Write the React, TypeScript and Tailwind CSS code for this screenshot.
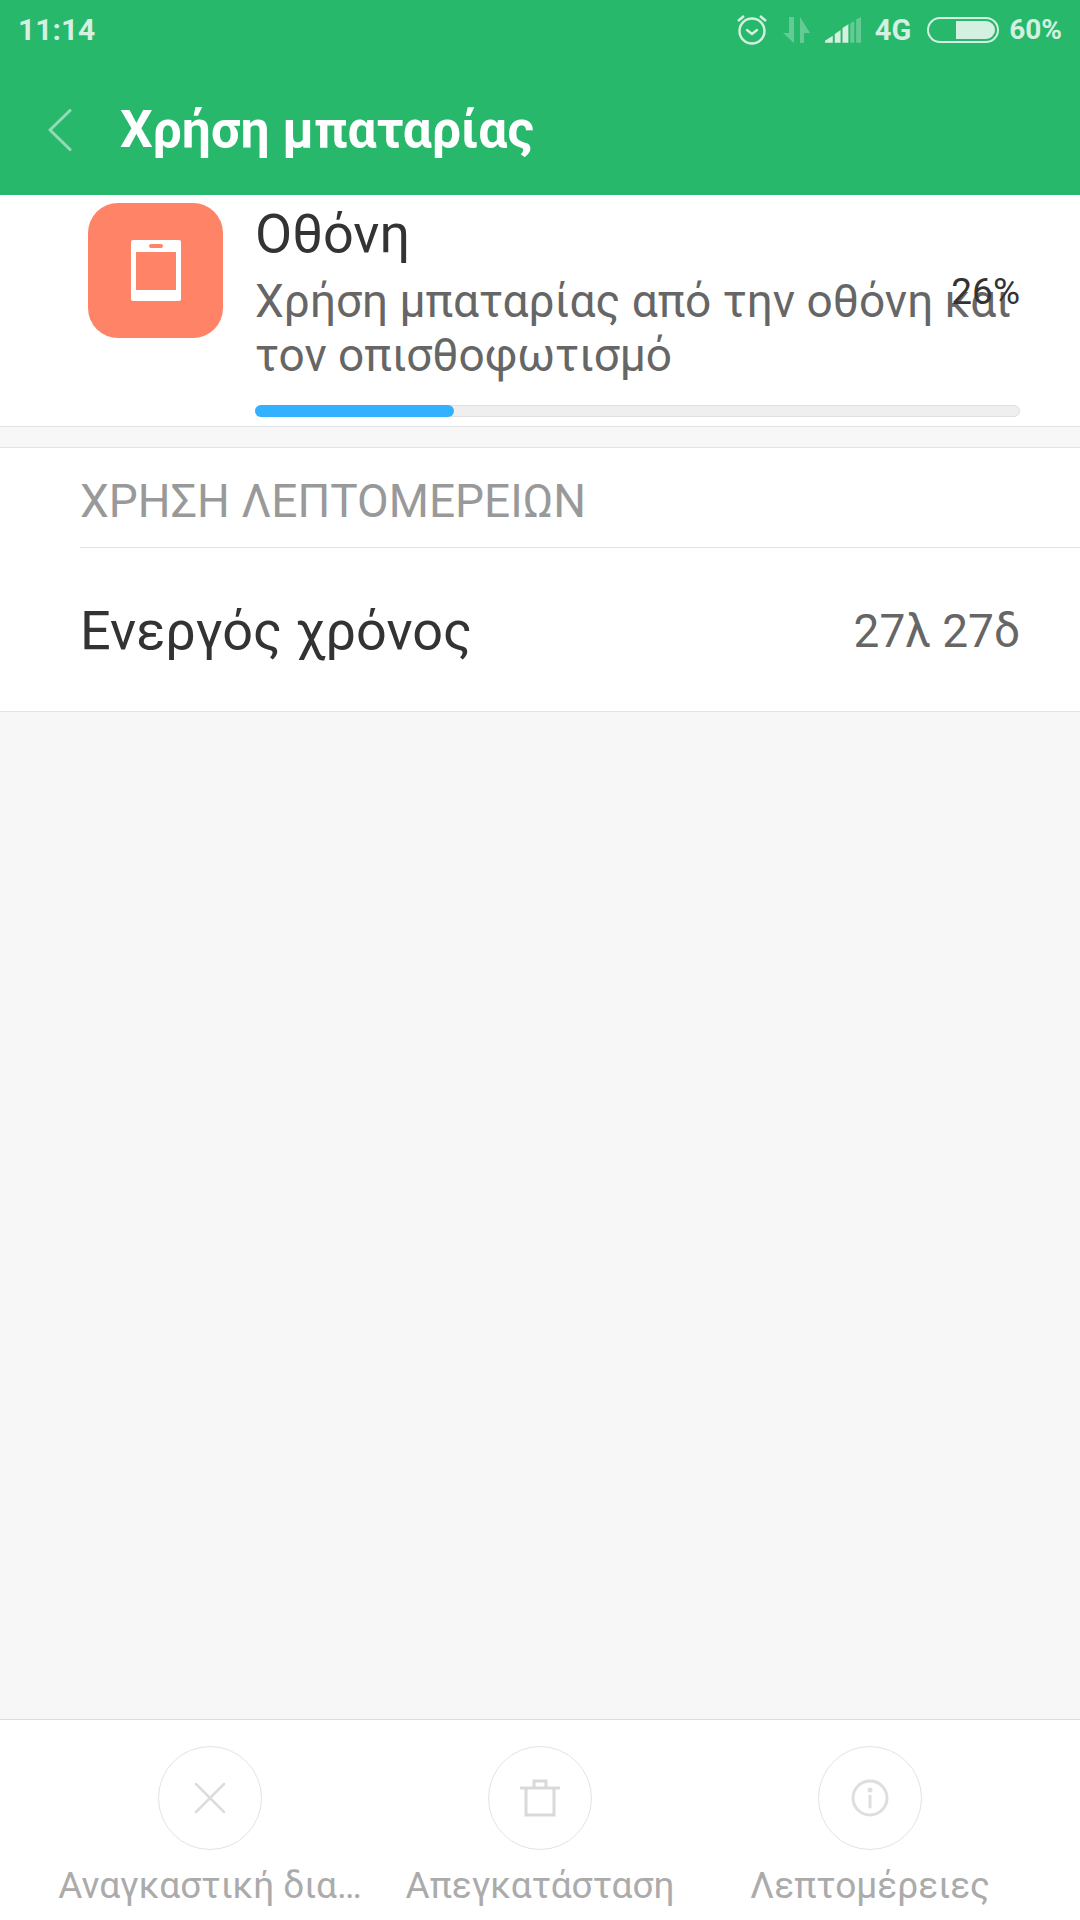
import React from "react";

const font = { fontFamily: "Roboto, sans-serif" };

function StatusIcons() {
  return (
    <div className="flex items-center text-[#d4f0e0] font-bold text-[29px] leading-none">
      <svg width="32" height="32" viewBox="0 0 32 32" fill="none" stroke="#d4f0e0" strokeWidth="2.4" className="mr-[15px] -mt-[2px]">
        <circle cx="16" cy="18" r="12.5" />
        <path d="M11 17l5 4 5-4" strokeLinecap="round" strokeLinejoin="round" />
        <path d="M2 8l6-5M30 8l-6-5" strokeWidth="2.4" />
      </svg>
      <svg width="27" height="26" viewBox="0 0 27 26" fill="#d4f0e0" opacity="0.35" className="mr-[15px]">
        <path d="M11 0v26L0 16h6V0zM17 0L27 16h-6v10h-4z" />
      </svg>
      <svg width="37" height="26" viewBox="0 0 38 26" className="mr-[13px]">
        <path d="M0 26v-2l8-5v7zM10 26V17l6-4v13zM18 26V11l6-4v19z" fill="#d4f0e0" />
        <path d="M26 26V6l4-2v22zM32 26V2l5-2v26z" fill="#d4f0e0" opacity="0.35" />
      </svg>
      <span className="mr-[16px]">4G</span>
      <div className="w-[72px] h-[26px] rounded-full border-2 border-[#d4f0e0] mr-[10px] p-[2px] flex justify-end">
        <div className="w-[39px] h-full bg-[#d4f0e0] rounded-r-full" />
      </div>
      <span className="text-[28px]">60%</span>
    </div>
  );
}

function Action({ label, children }: { label: string; children: React.ReactNode }) {
  return (
    <div className="w-[330px] flex flex-col items-center min-w-0">
      <div className="w-[104px] h-[104px] rounded-full border border-[#e3e3e3] flex items-center justify-center">
        {children}
      </div>
      <span className="text-[37px] leading-[40px] mt-[16px] text-[#ababab] whitespace-nowrap">{label}</span>
    </div>
  );
}

export default function App() {
  return (
    <div className="w-[1080px] h-[1920px] flex flex-col bg-[#f7f7f7] overflow-hidden" style={font}>
      <header className="h-[195px] bg-[#28b86b] shrink-0">
        <div className="h-[60px] flex items-center justify-between pl-[18px] pr-[18px]">
          <span className="text-[30px] font-bold text-[#d4f0e0] leading-none">11:14</span>
          <StatusIcons />
        </div>
        <div className="h-[100px] mt-[20px] flex items-center pl-[48px]">
          <svg width="24" height="42" viewBox="0 0 24 42" fill="none" stroke="#93dbb5" strokeWidth="3" strokeLinecap="round" strokeLinejoin="round">
            <path d="M22 1.5L2 21l20 19.5" />
          </svg>
          <h1 className="ml-[48px] text-[51.6px] font-bold text-white leading-none">Χρήση μπαταρίας</h1>
        </div>
      </header>

      <section className="relative h-[232px] bg-white border-b border-[#e3e3e3] shrink-0 flex pl-[88px] pr-[60px] pt-[8px]">
        <div className="w-[135px] h-[135px] rounded-[30px] bg-[#ff8467] flex items-center justify-center shrink-0">
          <svg width="50" height="61" viewBox="0 0 50 61" className="ml-[1px]">
            <path fillRule="evenodd" fill="#fff" d="M2 0h46a2 2 0 012 2v57a2 2 0 01-2 2H2a2 2 0 01-2-2V2a2 2 0 012-2zM5 12v38h40V12zM20 4a2 2 0 000 4h10a2 2 0 000-4z" />
          </svg>
        </div>
        <div className="ml-[33px] flex-1 min-w-0 flex flex-col">
          <div className="text-[54px] leading-[62px] text-[#333] -ml-[1px]">Οθόνη</div>
          <div className="text-[46px] leading-[54px] text-[#666] mt-[9px] -ml-[1px] whitespace-nowrap">
            Χρήση μπαταρίας από την οθόνη και<br />τον οπισθοφωτισμό
          </div>
          <div className="mt-[23px] -ml-[1px] h-[12px] rounded-full bg-[#efefef] border border-[#e0e0e0]">
            <div className="h-[12px] -mt-[1px] -ml-[1px] w-[199px] bg-[#33b1ff] rounded-full" />
          </div>
        </div>
        <span className="absolute right-[60px] top-[78px] text-[37px] leading-none text-[#333]">26%</span>
      </section>

      <div className="h-[20px] shrink-0" />

      <section className="bg-white border-t border-b border-[#e3e3e3] shrink-0 h-[265px] flex flex-col">
        <div className="ml-[80px] h-[100px] border-b border-[#e3e3e3] flex items-center">
          <span className="text-[46px] text-[#999] leading-none mt-[6px]">ΧΡΗΣΗ ΛΕΠΤΟΜΕΡΕΙΩΝ</span>
        </div>
        <div className="flex-1 flex items-center justify-between pl-[80px] pr-[60px]">
          <span className="text-[54px] text-[#333] leading-none mt-[3px]">Ενεργός χρόνος</span>
          <span className="text-[46px] text-[#666] leading-none mt-[2px]">27λ 27δ</span>
        </div>
      </section>

      <div className="flex-1" />

      <footer className="h-[201px] bg-white border-t border-[#dcdcdc] shrink-0 flex pt-[26px] px-[45px]">
        <Action label="Αναγκαστική δια…">
          <svg width="32" height="32" viewBox="0 0 32 32" stroke="#dcdcdc" strokeWidth="2.5" strokeLinecap="round">
            <path d="M2 2l28 28M30 2L2 30" />
          </svg>
        </Action>
        <Action label="Απεγκατάσταση">
          <svg width="40" height="38" viewBox="0 0 40 38" fill="none" stroke="#d9d9d9" strokeWidth="3">
            <path d="M0 9h40M6 9v27h28V9M14 9V2h12v7" />
          </svg>
        </Action>
        <Action label="Λεπτομέρειες">
          <svg width="38" height="38" viewBox="0 0 38 38" fill="none" stroke="#dedede" strokeWidth="3">
            <circle cx="19" cy="19" r="17" />
            <path d="M19 17v11" strokeLinecap="round" />
            <circle cx="19" cy="11" r="1" fill="#dedede" />
          </svg>
        </Action>
      </footer>
    </div>
  );
}
